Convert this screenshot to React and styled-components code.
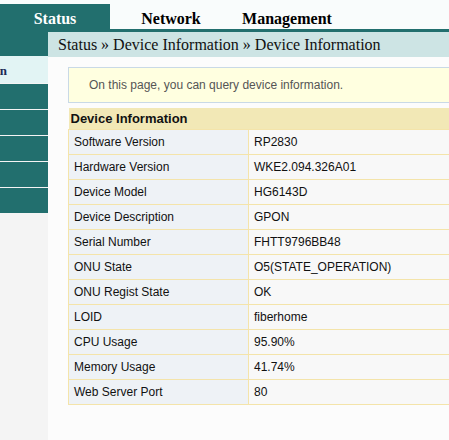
import React from 'react'
import styled, { createGlobalStyle } from 'styled-components'

const GlobalStyle = createGlobalStyle`
  html, body {
    margin: 0;
    padding: 0;
    background: #fcfcfc;
    overflow: hidden;
  }
`

const teal = '#226f6e'

const Page = styled.div`
  width: 720px;
  min-height: 440px;
  background: #fcfcfc;
`

const TopBar = styled.div`
  display: flex;
  padding-top: 4px;
  background: #f9fcfc;
  border-bottom: 3px solid ${teal};
`

const Tab = styled.div`
  box-sizing: border-box;
  width: ${p => p.w}px;
  height: 25px;
  padding-top: 4px;
  display: flex;
  align-items: center;
  justify-content: center;
  font-family: "Liberation Serif", serif;
  font-weight: bold;
  font-size: 16px;
  color: ${p => (p.active ? '#ffffff' : '#000000')};
  background: ${p => (p.active ? teal : 'transparent')};
`

const Body = styled.div`
  display: flex;
  align-items: stretch;
`

const Sidebar = styled.div`
  width: 48px;
  flex-shrink: 0;
  background: #f4f4f4;
  min-height: 408px;
  display: flex;
  flex-direction: column;
  gap: 1px;
`

const SideHead = styled.div`
  height: 24px;
  margin-bottom: -1px;
  background: ${teal};
`

const SideItem = styled.div`
  box-sizing: border-box;
  height: ${p => (p.active ? 27 : 25)}px;
  padding-top: ${p => (p.active ? 3 : 0)}px;
  background: ${p => (p.active ? '#e2f4f4' : teal)};
  overflow: hidden;
  white-space: nowrap;
  display: flex;
  align-items: center;
  justify-content: flex-end;
  padding-right: 41px;
  font-family: "Liberation Serif", serif;
  font-weight: bold;
  font-size: 13px;
  color: #1b2b55;
`

const Main = styled.div`
  flex: 1;
  background: #fcfcfc;
`

const Crumb = styled.div`
  height: 25px;
  display: flex;
  align-items: center;
  padding-left: 10px;
  background: #cde4e4;
  font-family: "Liberation Serif", serif;
  font-size: 16px;
  color: #111;
`

const Content = styled.div`
  padding: 10px 0 0 20px;
`

const Notice = styled.div`
  height: 34px;
  display: flex;
  align-items: center;
  padding-left: 20px;
  background: #ffffe0;
  border: 1px solid #c9d9e6;
  font-family: "Liberation Sans", Arial, sans-serif;
  font-size: 12px;
  color: #555;
`

const Table = styled.table`
  margin-top: 5px;
  width: 100%;
  border-collapse: collapse;
  font-family: "Liberation Sans", Arial, sans-serif;
  font-size: 12px;
  color: #111;
`

const HeadCell = styled.th`
  height: 21px;
  padding: 0 2px;
  text-align: left;
  font-size: 13px;
  font-weight: bold;
  background: #f2e8b6;
`

const Cell = styled.td`
  height: 24px;
  padding: 0 0 0 5px;
  border: 1px solid #f4e4aa;
  background: ${p => (p.label ? '#eef2f6' : '#f8f8f8')};
  width: ${p => (p.label ? '174px' : 'auto')};
`

const rows = [
  ['Software Version', 'RP2830'],
  ['Hardware Version', 'WKE2.094.326A01'],
  ['Device Model', 'HG6143D'],
  ['Device Description', 'GPON'],
  ['Serial Number', 'FHTT9796BB48'],
  ['ONU State', 'O5(STATE_OPERATION)'],
  ['ONU Regist State', 'OK'],
  ['LOID', 'fiberhome'],
  ['CPU Usage', '95.90%'],
  ['Memory Usage', '41.74%'],
  ['Web Server Port', '80'],
]

export default function App() {
  return (
    <Page>
      <GlobalStyle />
      <TopBar>
        <Tab w={110} active>Status</Tab>
        <Tab w={122}>Network</Tab>
        <Tab w={110}>Management</Tab>
      </TopBar>
      <Body>
        <Sidebar>
          <SideHead />
          <SideItem active>Device Information</SideItem>
          <SideItem />
          <SideItem />
          <SideItem />
          <SideItem />
          <SideItem />
        </Sidebar>
        <Main>
          <Crumb>Status » Device Information » Device Information</Crumb>
          <Content>
            <Notice>On this page, you can query device information.</Notice>
            <Table>
              <thead>
                <tr>
                  <HeadCell colSpan={2}>Device Information</HeadCell>
                </tr>
              </thead>
              <tbody>
                {rows.map(([k, v]) => (
                  <tr key={k}>
                    <Cell label>{k}</Cell>
                    <Cell>{v}</Cell>
                  </tr>
                ))}
              </tbody>
            </Table>
          </Content>
        </Main>
      </Body>
    </Page>
  )
}
